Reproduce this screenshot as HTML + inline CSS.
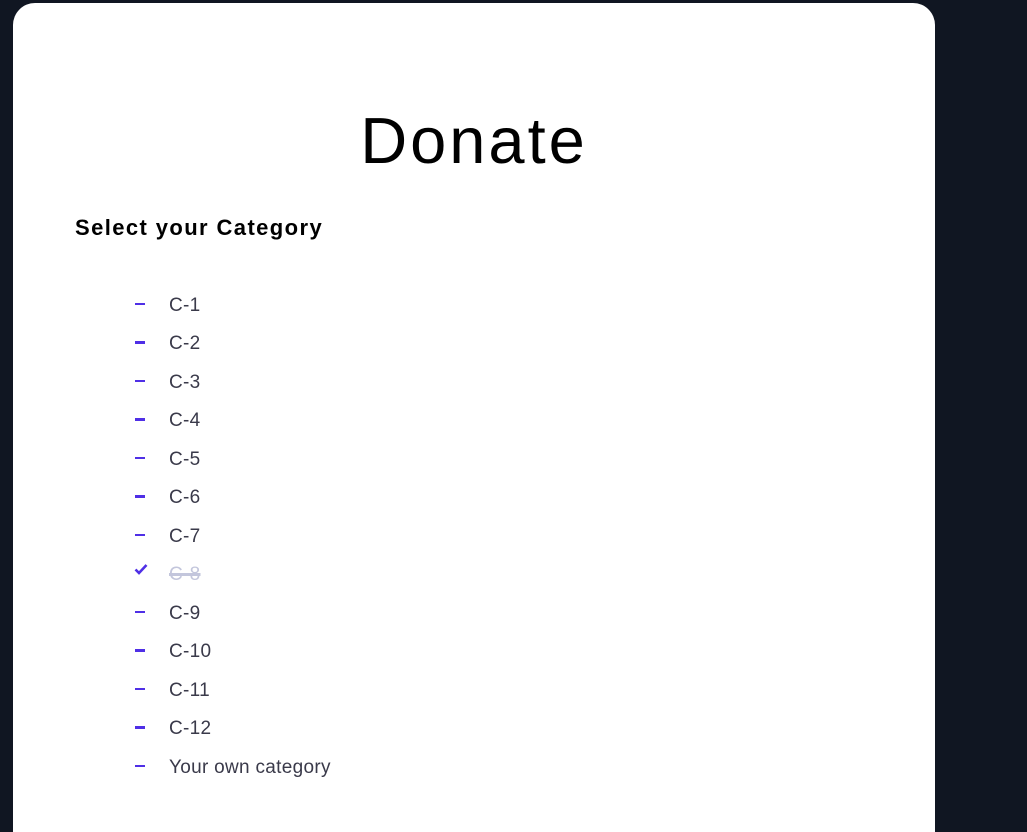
<!DOCTYPE html>
<html><head><meta charset="utf-8"><style>
html,body{margin:0;padding:0;background:#101622;width:1027px;height:832px;overflow:hidden;font-family:"Liberation Sans",sans-serif;}
.card{position:absolute;left:13px;top:3px;width:922px;height:829px;background:#fff;border-radius:22px 22px 0 0;overflow:hidden;}
h1{position:absolute;left:0;width:922px;top:98px;margin:0;text-align:center;font-weight:normal;font-size:65px;line-height:80px;color:#000;letter-spacing:3px;}
h2{position:absolute;left:62px;top:212px;margin:0;font-size:22px;font-weight:bold;letter-spacing:1.4px;color:#000;}
.item{position:absolute;left:0;height:24px;font-size:19px;color:#3a3a4a;letter-spacing:0.3px;}
.item .d{position:absolute;left:122px;top:11px;width:10px;height:2px;background:#4f2fe6;}
.item .t{position:absolute;left:156px;top:2px;line-height:24px;white-space:nowrap;}
.done .t{color:#c3c6dc;text-decoration:line-through;text-decoration-thickness:3px;}
</style></head><body>
<div class="card">
<h1>Donate</h1>
<h2>Select your Category</h2>
<div class="item" style="top:289px"><span class="d"></span><span class="t">C-1</span></div>
<div class="item" style="top:327px"><span class="d" style="height:3px"></span><span class="t">C-2</span></div>
<div class="item" style="top:366px"><span class="d"></span><span class="t">C-3</span></div>
<div class="item" style="top:404px"><span class="d" style="height:3px"></span><span class="t">C-4</span></div>
<div class="item" style="top:443px"><span class="d"></span><span class="t">C-5</span></div>
<div class="item" style="top:481px"><span class="d" style="height:3px"></span><span class="t">C-6</span></div>
<div class="item" style="top:520px"><span class="d"></span><span class="t">C-7</span></div>
<div class="item done" style="top:558px"><svg style="position:absolute;left:121px;top:2px" width="14" height="12" viewBox="0 0 14 12"><path d="M1.5 6.5 L5 10 L12.5 2" stroke="#4f2fe6" stroke-width="2.6" fill="none"/></svg><span class="t">C-8</span></div>
<div class="item" style="top:597px"><span class="d"></span><span class="t">C-9</span></div>
<div class="item" style="top:635px"><span class="d" style="height:3px"></span><span class="t">C-10</span></div>
<div class="item" style="top:674px"><span class="d"></span><span class="t">C-11</span></div>
<div class="item" style="top:712px"><span class="d" style="height:3px"></span><span class="t">C-12</span></div>
<div class="item" style="top:751px"><span class="d"></span><span class="t">Your own category</span></div>
</div>
</body></html>
